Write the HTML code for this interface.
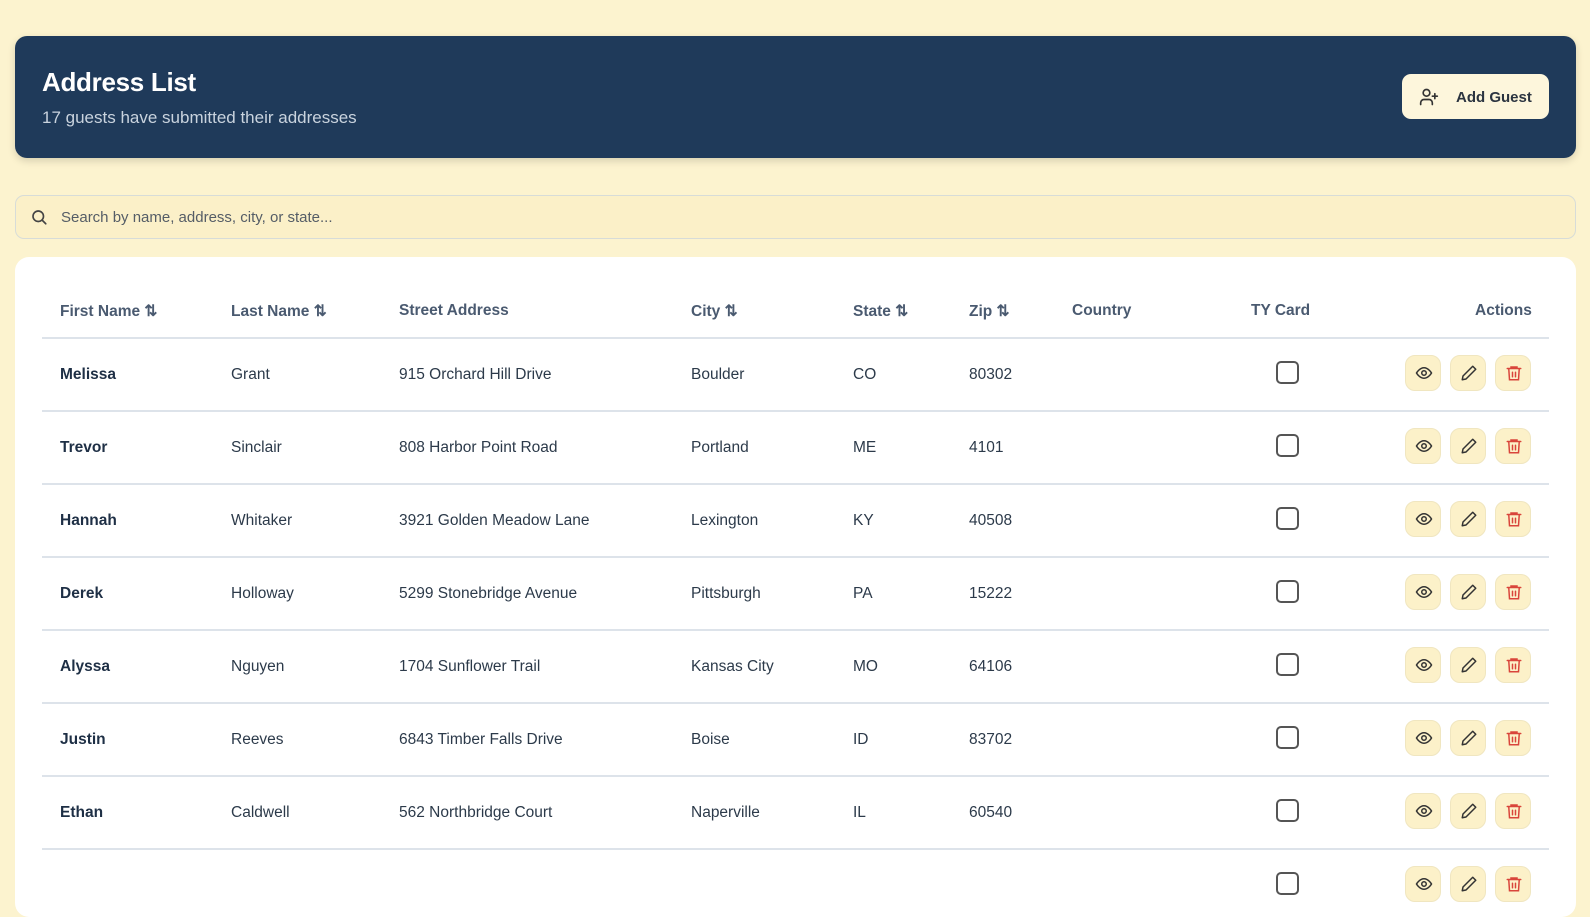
<!DOCTYPE html>
<html><head><meta charset="utf-8"><style>
*{box-sizing:border-box;margin:0;padding:0}
body{width:1590px;height:870px;overflow:hidden;background:#fcf3cf;font-family:"Liberation Sans",sans-serif;color:#1e3a5f;position:relative}
.hdr{position:absolute;left:15px;top:36px;width:1561px;height:122px;background:#1f3a5a;border-radius:12px;box-shadow:0 3px 8px rgba(0,0,0,.15)}
.hdr h1{position:absolute;left:27px;top:31px;font-size:26px;color:#fff;font-weight:bold;letter-spacing:-.3px}
.hdr p{position:absolute;left:27px;top:72px;font-size:17px;color:#c9d3de}
.btn{position:absolute;left:1387px;top:38px;width:147px;height:45px;background:#fdf6dc;border-radius:9px;font-size:15px;font-weight:bold;color:#2b3440}
.btn svg{position:absolute;left:17px;top:13px}
.btn span{position:absolute;left:54px;top:15px}
.search{position:absolute;left:15px;top:195px;width:1561px;height:44px;border:1px solid #d7dcd8;border-radius:9px;background:#fbf0c8}
.search svg{position:absolute;left:14px;top:12px}
.search span{position:absolute;left:45px;top:13px;font-size:15px;color:#555d66}
.card{position:absolute;left:15px;top:257px;width:1561px;height:660px;background:#fff;border-radius:14px}
.t{position:absolute;font-size:15.5px;color:#2c3a4a}
.th{position:absolute;font-size:15.5px;font-weight:bold;color:#4a5a70;top:302px}
.line{position:absolute;left:42px;width:1507px;height:1.5px;background:#dde3ea}
.b{font-weight:bold;color:#1e2f45}
.cb{position:absolute;left:1276px;width:23px;height:23px;border:2px solid #555;border-radius:5px}
.ab{position:absolute;width:36px;height:36px;border-radius:10px;background:#fcf1c9;border:1px solid #f0e6c0}
.ab svg{position:absolute;left:9px;top:8px}
</style></head><body>
<div class="hdr"><h1>Address List</h1><p>17 guests have submitted their addresses</p>
<div class="btn"><svg width="20" height="20" viewBox="0 0 24 24" fill="none" stroke="#333" stroke-width="2" stroke-linecap="round"><circle cx="9" cy="7" r="4"/><path d="M2 21v-2a4 4 0 0 1 4-4h6a4 4 0 0 1 4 4v2M19 8v6M16 11h6"/></svg><span>Add Guest</span></div></div>
<div class="search"><svg width="18" height="18" viewBox="0 0 24 24" fill="none" stroke="#444" stroke-width="2.2" stroke-linecap="round"><circle cx="11" cy="11" r="7"/><path d="M21 21l-4.5-4.5"/></svg><span>Search by name, address, city, or state...</span></div>
<div class="card"></div>
<div class="th" style="left:60px">First Name ⇅</div>
<div class="th" style="left:231px">Last Name ⇅</div>
<div class="th" style="left:399px">Street Address</div>
<div class="th" style="left:691px">City ⇅</div>
<div class="th" style="left:853px">State ⇅</div>
<div class="th" style="left:969px">Zip ⇅</div>
<div class="th" style="left:1072px">Country</div>
<div class="th" style="left:1251px">TY Card</div>
<div class="th" style="left:1475px">Actions</div>
<div class="line" style="top:337px"></div>
<div id="rows"></div>
<script>
const d=[["Melissa","Grant","915 Orchard Hill Drive","Boulder","CO","80302"],["Trevor","Sinclair","808 Harbor Point Road","Portland","ME","4101"],["Hannah","Whitaker","3921 Golden Meadow Lane","Lexington","KY","40508"],["Derek","Holloway","5299 Stonebridge Avenue","Pittsburgh","PA","15222"],["Alyssa","Nguyen","1704 Sunflower Trail","Kansas City","MO","64106"],["Justin","Reeves","6843 Timber Falls Drive","Boise","ID","83702"],["Ethan","Caldwell","562 Northbridge Court","Naperville","IL","60540"],["","","","","",""]];
const xs=[60,231,399,691,853,969];let h="";
const eye='<svg width="18" height="18" viewBox="0 0 24 24" fill="none" stroke="#333" stroke-width="2"><path d="M2 12s4-7 10-7 10 7 10 7-4 7-10 7S2 12 2 12z"/><circle cx="12" cy="12" r="3"/></svg>';
const pen='<svg width="18" height="18" viewBox="0 0 24 24" fill="none" stroke="#333" stroke-width="2" stroke-linejoin="round"><path d="M17 3l4 4L8 20l-5 1 1-5z"/></svg>';
const tr='<svg width="18" height="18" viewBox="0 0 24 24" fill="none" stroke="#d9453b" stroke-width="2" stroke-linecap="round"><path d="M3 6h18M8 6V4h8v2M5 6l1 15h12l1-15M10 11v6M14 11v6"/></svg>';
d.forEach((r,i)=>{const y=374+i*73;
r.forEach((v,j)=>{h+=`<div class="t${j==0?' b':''}" style="left:${xs[j]}px;top:${y-8}px">${v}</div>`});
h+=`<div class="cb" style="top:${y-13}px"></div>`;
[1405,1450,1495].forEach((x,k)=>{h+=`<div class="ab" style="left:${x}px;top:${y-19}px">${[eye,pen,tr][k]}</div>`});
if(i<7)h+=`<div class="line" style="top:${y+36}px"></div>`;});
document.getElementById('rows').innerHTML=h;
</script>
</body></html>
